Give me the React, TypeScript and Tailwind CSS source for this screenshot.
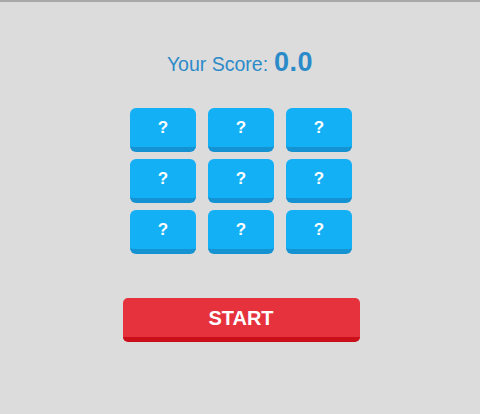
const tiles = Array.from({ length: 9 }, (_, i) => i)

export default function App() {
  return (
    <div
      className="w-[480px] h-[414px] bg-[#dddcdd] border-t-2 border-[#a8a8a8] flex flex-col items-center"
      style={{ fontFamily: '"Liberation Sans", Arial, sans-serif' }}
    >
      <div className="mt-[40px] h-[30px] flex items-baseline text-[#2b8bc9]">
        <span className="text-[19.5px]">Your Score:</span>
        <span className="ml-[6px] text-[27px] font-bold tracking-[0.5px]">0.0</span>
      </div>
      <div className="mt-[36px] ml-[2px] grid grid-cols-3 gap-x-[12px] gap-y-[7px]">
        {tiles.map((t) => (
          <button
            key={t}
            className="w-[66px] h-[44px] rounded-[6px] bg-[#13b0f6] border-b-[5px] border-[#1592d2] text-white font-bold text-[17px] flex items-center justify-center pt-[1px]"
          >
            ?
          </button>
        ))}
      </div>
      <button className="mt-[44px] ml-[2px] w-[237px] h-[44px] rounded-[5px] bg-[#e5323d] border-b-[5px] border-[#c90f1a] text-white font-bold text-[20px] flex items-center justify-center">
        START
      </button>
    </div>
  )
}
